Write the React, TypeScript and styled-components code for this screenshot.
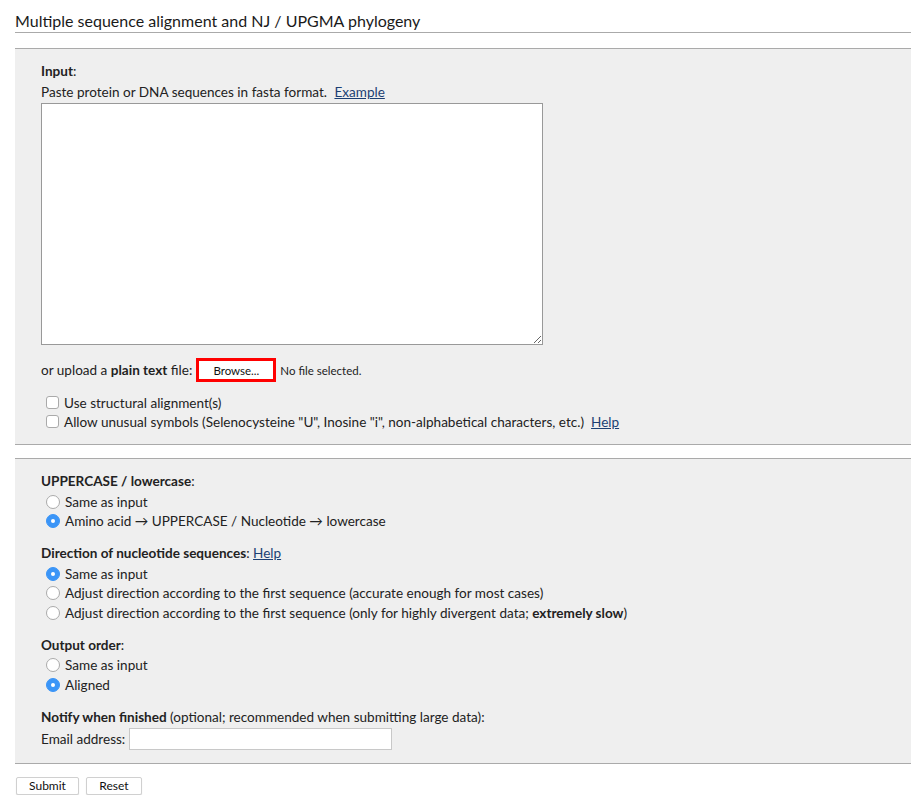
import React from "react";
import styled, { createGlobalStyle } from "styled-components";

const Global = createGlobalStyle`
  html, body { margin: 0; padding: 0; background: #fff; }
  body { font-family: Lato, "Noto Sans", sans-serif; color: #222; font-size: 13.55px; }
`;

const Page = styled.div`
  padding: 0 0 0 15px;
`;

const Title = styled.h1`
  margin: 12px 0 0;
  padding: 0 0 2px;
  font-size: 16px;
  font-weight: 400;
  line-height: 18px;
  color: #1a1a1a;
  border-bottom: 1px solid #aaa;
`;

const Panel = styled.div<{ $top: number }>`
  margin-top: ${(p) => p.$top}px;
  background: #efefef;
  border-top: 1px solid #aaa;
  border-bottom: 1px solid #aaa;
  padding: 12px 26px 13px;
`;

const Heading = styled.div`
  line-height: 20px;
  font-weight: 700;
  color: #222;
  margin-bottom: 1px;
  & > span { font-weight: 400; }
`;

const Group = styled.div<{ $gap?: number }>`
  margin-top: ${(p) => p.$gap ?? 0}px;
`;

const Line = styled.div`
  line-height: 20px;
`;

const Link = styled.a`
  color: #1c3f73;
  text-decoration: underline;
  margin-left: 4px;
`;

const TextArea = styled.textarea`
  display: block;
  margin-top: 1px;
  width: 502px;
  height: 242px;
  box-sizing: border-box;
  border: 1px solid #999;
  background: #fff;
  resize: both;
`;

const UploadRow = styled.div`
  display: flex;
  align-items: center;
  margin-top: 13px;
  height: 24px;
  gap: 4px;
`;

const Highlight = styled.span`
  display: inline-flex;
  border: 3px solid #f00;
  background: #fff;
  width: 80px;
  height: 24px;
  box-sizing: border-box;
  align-items: center;
  justify-content: center;
  font-size: 11.5px;
  color: #111;
`;

const Small = styled.span`
  font-size: 11.5px;
  color: #222;
`;

const Options = styled.div`
  margin-top: 11px;
  padding-left: 5px;
`;

const CheckRow = styled.label`
  display: flex;
  align-items: center;
  height: 19px;
  gap: 5px;
`;

const Check = styled.span`
  width: 13px;
  height: 13px;
  border: 1px solid #aaa;
  border-radius: 3px;
  background: #fff;
  box-sizing: border-box;
  flex: none;
`;

const RadioRow = styled.label`
  display: flex;
  align-items: center;
  height: 19.5px;
  gap: 5px;
  padding-left: 5px;
`;

const Radio = styled.span<{ $on?: boolean }>`
  width: 14px;
  height: 14px;
  border-radius: 50%;
  box-sizing: border-box;
  flex: none;
  background: ${(p) => (p.$on ? "#3b95f7" : "#fff")};
  border: 1px solid ${(p) => (p.$on ? "#3b95f7" : "#aaa")};
  display: flex;
  align-items: center;
  justify-content: center;
  &::after {
    content: "";
    display: ${(p) => (p.$on ? "block" : "none")};
    width: 4px;
    height: 4px;
    border-radius: 50%;
    background: #fff;
  }
`;

const EmailRow = styled.div`
  display: flex;
  align-items: center;
  gap: 4px;
  margin-top: 1px;
`;

const Input = styled.input`
  width: 263px;
  height: 22px;
  box-sizing: border-box;
  border: 1px solid #c8c8c8;
  background: #fff;
`;

const Buttons = styled.div`
  display: flex;
  gap: 7px;
  margin-top: 13px;
  padding-left: 1px;
`;

const Button = styled.button<{ $w: number }>`
  width: ${(p) => p.$w}px;
  height: 18px;
  padding: 0;
  background: #fff;
  border: 1px solid #d0d0d0;
  border-radius: 2px;
  box-shadow: 0 1px 1px rgba(0,0,0,0.12);
  font-family: Lato, "Noto Sans", sans-serif;
  font-size: 12px;
  color: #111;
`;

const radio = (on: boolean, text: React.ReactNode) => (
  <RadioRow>
    <Radio $on={on} />
    <span>{text}</span>
  </RadioRow>
);

export default function App() {
  return (
    <>
      <Global />
      <Page>
        <Title>Multiple sequence alignment and NJ / UPGMA phylogeny</Title>
        <Panel $top={15}>
          <Heading>Input<span>:</span></Heading>
          <Line>
            Paste protein or DNA sequences in fasta format. <Link>Example</Link>
          </Line>
          <TextArea />
          <UploadRow>
            <span>or upload a <b>plain text</b> file:</span>
            <Highlight>Browse...</Highlight>
            <Small>No file selected.</Small>
          </UploadRow>
          <Options>
            <CheckRow>
              <Check />
              <span>Use structural alignment(s)</span>
            </CheckRow>
            <CheckRow>
              <Check />
              <span>
                Allow unusual symbols (Selenocysteine "U", Inosine "i", non-alphabetical characters, etc.)
                <Link style={{ marginLeft: 7 }}>Help</Link>
              </span>
            </CheckRow>
          </Options>
        </Panel>
        <Panel $top={13}>
          <Group>
            <Heading>UPPERCASE / lowercase<span>:</span></Heading>
            {radio(false, "Same as input")}
            {radio(true, "Amino acid → UPPERCASE / Nucleotide → lowercase")}
          </Group>
          <Group $gap={12}>
            <Heading>
              Direction of nucleotide sequences<span>: </span>
              <Link style={{ fontWeight: 400, marginLeft: 0 }}>Help</Link>
            </Heading>
            {radio(true, "Same as input")}
            {radio(false, "Adjust direction according to the first sequence (accurate enough for most cases)")}
            {radio(
              false,
              <>
                Adjust direction according to the first sequence (only for highly divergent data; <b>extremely slow</b>)
              </>
            )}
          </Group>
          <Group $gap={12}>
            <Heading>Output order<span>:</span></Heading>
            {radio(false, "Same as input")}
            {radio(true, "Aligned")}
          </Group>
          <Group $gap={12}>
            <Heading>
              Notify when finished <span>(optional; recommended when submitting large data):</span>
            </Heading>
            <EmailRow>
              <span>Email address:</span>
              <Input />
            </EmailRow>
          </Group>
        </Panel>
        <Buttons>
          <Button $w={63}>Submit</Button>
          <Button $w={56}>Reset</Button>
        </Buttons>
      </Page>
    </>
  );
}
